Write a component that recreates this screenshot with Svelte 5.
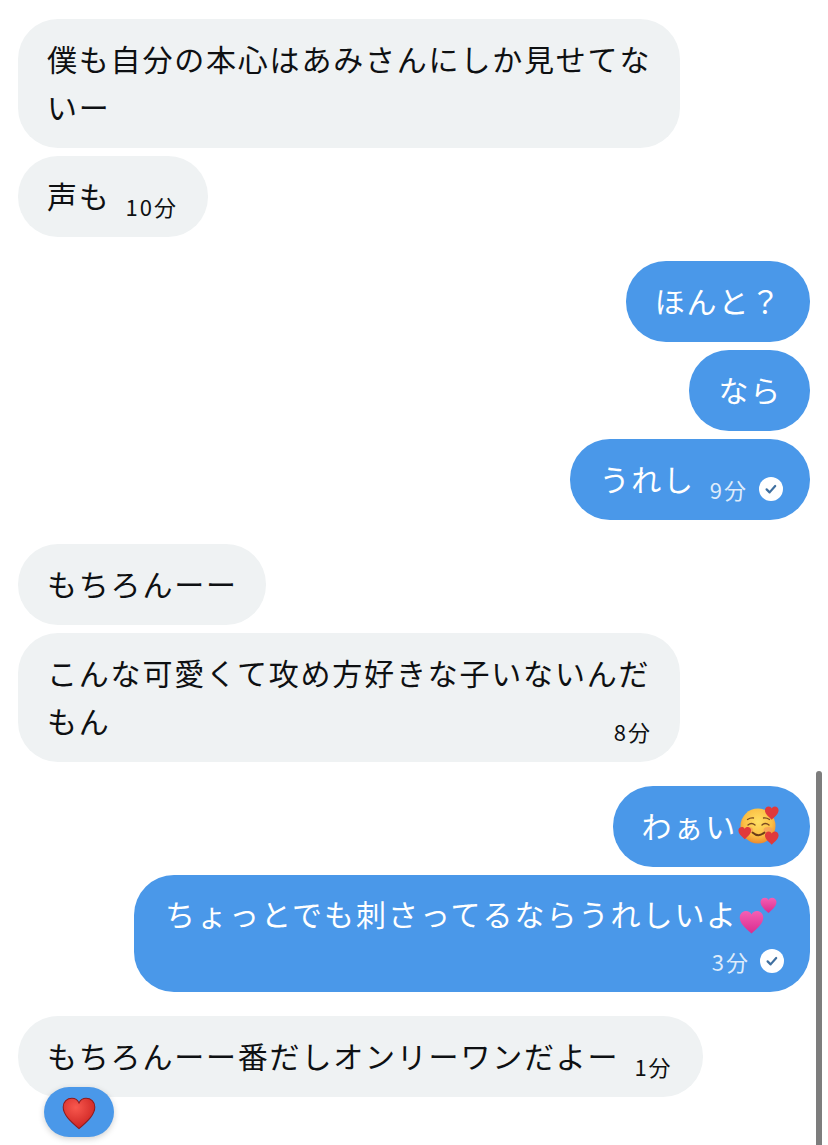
<script>
	const heart =
		'M50 94C22 70 3 52 3 30 3 14 15 4 29 4c9 0 17 5 21 14C54 9 62 4 71 4c14 0 26 10 26 26 0 22-19 40-47 64Z';
</script>

{#snippet check()}
	<svg class="check" viewBox="0 0 24 24" aria-hidden="true">
		<circle cx="12" cy="12" r="12" fill="#fff" />
		<path d="M7.6 12.4l3 3 5.6-6.4" fill="none" stroke="#3f6f9f" stroke-width="2.2" stroke-linecap="round" stroke-linejoin="round" />
	</svg>
{/snippet}

{#snippet smiling()}
	<svg class="smiling" viewBox="0 0 41 39" aria-hidden="true">
		<defs>
			<radialGradient id="face" cx="50%" cy="38%" r="62%">
				<stop offset="0" stop-color="#ffdf63" />
				<stop offset="0.65" stop-color="#fbbf45" />
				<stop offset="1" stop-color="#ee8a2c" />
			</radialGradient>
		</defs>
		<circle cx="20" cy="20" r="17.500" fill="url(#face)" />
		<ellipse cx="10.500" cy="24" rx="4.500" ry="3" fill="#f59a5c" opacity="0.7" />
		<ellipse cx="30" cy="24" rx="4.500" ry="3" fill="#f59a5c" opacity="0.7" />
		<path d="M10 19q3.500-3 7 0M24 19q3.500-3 7 0M9.500 13.500q3-2 6-1.500M25.500 12q3-.5 6 1.500" fill="none" stroke="#7a4a20" stroke-width="1.300" stroke-linecap="round" />
		<path d="M14.500 26.500q6 5.500 12 0" fill="none" stroke="#6b3c18" stroke-width="1.800" stroke-linecap="round" />
		<g fill="#e0393b">
			<path d={heart} transform="translate(26.500 0) scale(.145)" />
			<path d={heart} transform="translate(0 20.500) scale(.135)" />
			<path d={heart} transform="translate(26.500 25) scale(.145)" />
		</g>
	</svg>
{/snippet}

{#snippet twoHearts()}
	<svg class="two-hearts" viewBox="0 0 38 38" aria-hidden="true">
		<defs>
			<linearGradient id="pink" x1="0" y1="0" x2="0" y2="1">
				<stop offset="0" stop-color="#f45fb4" />
				<stop offset="1" stop-color="#d92c8e" />
			</linearGradient>
		</defs>
		<path d={heart} fill="url(#pink)" transform="translate(0 13) scale(.25)" />
		<path d={heart} fill="url(#pink)" transform="translate(21 0) scale(.17)" />
	</svg>
{/snippet}

<div class="thread">
	<section class="group">
		<div class="bubble in wide">僕も自分の本心はあみさんにしか見せてないー</div>
		<div class="bubble in row">
			<span>声も</span>
			<span class="meta">10分</span>
		</div>
	</section>

	<section class="group">
		<div class="bubble out">ほんと？</div>
		<div class="bubble out">なら</div>
		<div class="bubble out row tight">
			<span>うれし</span>
			<span class="meta">9分</span>
			{@render check()}
		</div>
	</section>

	<section class="group">
		<div class="bubble in">もちろんーー</div>
		<div class="bubble in wide">
			こんな可愛くて攻め方好きな子いないんだ
			<div class="last-line">
				<span>もん</span>
				<span class="meta">8分</span>
			</div>
		</div>
	</section>

	<section class="group">
		<div class="bubble out with-emoji">わぁい{@render smiling()}</div>
		<div class="bubble out stacked">
			<div class="with-emoji">ちょっとでも刺さってるならうれしいよ{@render twoHearts()}</div>
			<div class="status">
				<span class="meta">3分</span>
				{@render check()}
			</div>
		</div>
	</section>

	<section class="group">
		<div class="bubble in row">
			<span>もちろんーー番だしオンリーワンだよー</span>
			<span class="meta">1分</span>
		</div>
		<div class="reaction">
			<svg viewBox="0 0 100 98" aria-hidden="true">
				<defs>
					<radialGradient id="red" cx="40%" cy="30%" r="75%">
						<stop offset="0" stop-color="#f8584e" />
						<stop offset="1" stop-color="#c9201f" />
					</radialGradient>
				</defs>
				<path d={heart} fill="url(#red)" stroke="#8e1a1c" stroke-width="3" />
			</svg>
		</div>
	</section>

	<div class="scrollbar"></div>
</div>

<style>
	:global(body) {
		background: #fff;
		overflow: hidden;
	}

	.thread {
		position: relative;
		box-sizing: border-box;
		width: 828px;
		height: 1145px;
		overflow: hidden;
		padding: 19px 18px 0;
		display: flex;
		flex-direction: column;
		gap: 24px;
		font-family: 'Noto Sans CJK JP', 'Noto Sans', sans-serif;
		font-size: 30px;
		font-weight: 400;
		line-height: 48px;
		letter-spacing: 1.8px;
		color: #0e1012;
	}

	.group {
		display: flex;
		flex-direction: column;
		gap: 8px;
	}

	.bubble {
		box-sizing: border-box;
		width: fit-content;
		padding: 14.5px 28px 18.5px 29px;
		border-radius: 40px;
	}

	.in {
		background: #eff2f3;
	}

	.out {
		align-self: flex-end;
		background: #4a98e9;
		color: #fff;
	}

	.wide {
		width: 662px;
	}

	.row {
		display: flex;
		align-items: center;
		gap: 15px;
		padding-right: 30px;
	}

	.tight {
		padding-right: 27px;
	}

	.tight .check {
		margin-left: -4px;
		margin-top: 23px;
	}

	.meta {
		font-size: 22px;
		line-height: 24px;
		letter-spacing: 2px;
		white-space: nowrap;
		margin-top: 22px;
	}

	.out .meta {
		color: #dfecfb;
	}

	.last-line {
		display: flex;
		justify-content: space-between;
		align-items: center;
	}

	.check {
		width: 24px;
		height: 24px;
		flex: none;
	}

	.with-emoji {
		display: flex;
		align-items: center;
		white-space: nowrap;
	}

	.bubble.with-emoji {
		padding-right: 31px;
	}

	.smiling {
		width: 41px;
		height: 39px;
		flex: none;
		margin-left: 1px;
		margin-top: 2px;
	}

	.two-hearts {
		width: 38px;
		height: 38px;
		flex: none;
		margin-left: 1px;
		margin-top: 6px;
	}

	.stacked {
		width: 676px;
		padding: 14px 26px 11px 31px;
		letter-spacing: 2px;
	}

	.status {
		display: flex;
		justify-content: flex-end;
		align-items: center;
		gap: 10px;
		height: 40px;
		margin-top: 4px;
	}

	.status .meta {
		margin-top: 0;
	}

	.reaction {
		display: flex;
		align-items: center;
		justify-content: center;
		width: 70px;
		height: 50px;
		margin: -18px 0 0 26px;
		border-radius: 25px;
		background: #4a98e9;
		box-shadow: 0 2px 6px rgba(0, 0, 0, 0.18);
	}

	.reaction svg {
		width: 34px;
		height: 33px;
		margin-top: 2px;
	}

	.scrollbar {
		position: absolute;
		right: 6px;
		top: 771px;
		bottom: 0;
		width: 6px;
		border-radius: 3px 3px 0 0;
		background: #7d7d7d;
	}
</style>
